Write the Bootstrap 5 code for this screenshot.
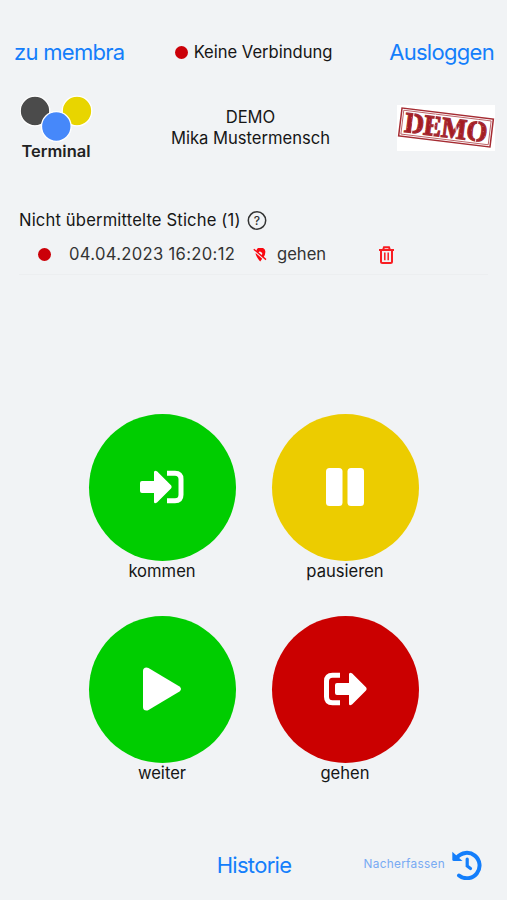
<!DOCTYPE html>
<html lang="de">
<head>
<meta charset="utf-8">
<meta name="viewport" content="width=device-width, initial-scale=1">
<title>Terminal</title>
<link href="https://cdn.jsdelivr.net/npm/bootstrap@5.3.0/dist/css/bootstrap.min.css" rel="stylesheet">
<style>
body{background:#f1f3f5;color:#161616;font-family:Inter,"Liberation Sans",sans-serif;font-size:16.6px;line-height:21px;height:900px;overflow:hidden}
a{color:#147efb;text-decoration:none}
svg{display:block;flex:none}
.topbar{height:44px;margin-top:30px;padding:0 13px 0 14px;display:grid;grid-template-columns:minmax(0,1fr) auto minmax(0,1fr)}
.topbar a,.history{font-size:22px;line-height:28px;letter-spacing:-.7px}
.status{gap:6px;letter-spacing:-.02px}
.dot{width:13px;height:13px;background:#cb0008;flex:none}
.status .dot{margin-left:-1px}
.brand{height:76px;margin-top:16px;padding:0 12px 0 20px;display:grid;grid-template-columns:minmax(0,1fr) auto minmax(0,1fr)}
.person{margin-right:14px}
.pending{height:203.5px;margin-top:44px;padding:0 19px}
.ttl{letter-spacing:.16px}
.stamp-row{height:40px;margin-top:4px;padding-left:19px;border-bottom:1px solid #eceef0;color:#333}
.stamp-time{margin-left:18px;width:167px;letter-spacing:.32px}
.stamp-pin{margin:0 10px 0 17px}
.stamp-kind{width:102px}
.actions{padding:0 70.5px}
.action{height:201.5px;color:#161616}
.action+.action+.action{padding-top:.5px}
.disc{width:147px;height:147px;color:#fff}
.go{background:#00cd00}.hold{background:#eccc00}.stop{background:#cb0000}
.bottom{height:44px;margin-top:26px;padding:0 25px 0 26px;display:grid;grid-template-columns:minmax(0,1fr) auto minmax(0,1fr)}
.later{font-size:11.8px;letter-spacing:.3px;color:#78aaf3;gap:7px}
</style>
</head>
<body>
<div class="d-flex flex-column">
<header class="topbar align-items-center">
  <a href="#">zu membra</a>
  <div class="status d-flex align-items-center"><span class="dot rounded-circle"></span><span>Keine Verbindung</span></div>
  <a href="#" class="text-end">Ausloggen</a>
</header>
<section class="brand align-items-center">
  <svg width="74" height="72" viewBox="0 0 74 72">
    <g stroke="#fff" stroke-width="1.3"><circle cx="15" cy="19" r="14.8" fill="#4b4b4b"/><circle cx="57" cy="19" r="14.8" fill="#e8d500"/><circle cx="36.3" cy="34.5" r="14.8" fill="#4688fa"/></g>
    <text x="1.5" y="64.5" textLength="69" lengthAdjust="spacingAndGlyphs" font-size="15.5" font-weight="600" fill="#222">Terminal</text>
  </svg>
  <div class="person text-center">DEMO<br>Mika Mustermensch</div>
  <svg class="ms-auto" width="98" height="46" viewBox="0 0 98 46">
    <path fill="#fff" d="M0 0h98v46H0z"/>
    <g transform="rotate(7 49 22.500)" fill="none" stroke="#a52b32">
      <path stroke-width="1.5" d="M3 8.500h92v28H3z"/><path stroke-width=".7" d="M5 10.500h88v24H5z"/>
      <text x="7.500" y="32" textLength="83" lengthAdjust="spacingAndGlyphs" font-family="Liberation Serif,serif" font-size="29" font-weight="700" fill="#a51c25" stroke-width="1.3">DEMO</text>
      <path stroke="#fff" stroke-width=".9" d="M15.500 11v22M37 11v22M57 13l4 18M80 11v22"/>
      <path stroke="#fff" stroke-width=".5" opacity=".6" stroke-dasharray="1 5" d="M7 17h85M8 22h82M10 27h80"/>
    </g>
  </svg>
</section>
<main>
  <section class="pending">
    <div class="d-flex align-items-center"><span class="ttl me-1">Nicht übermittelte Stiche (1)</span>
      <svg class="ms-1" width="19" height="21" viewBox="1.500 0 19 21" overflow="visible"><circle cx="9.500" cy="10.500" r="8.700" fill="none" stroke="#333" stroke-width="1.500"/><text x="9.500" y="14.800" text-anchor="middle" font-size="12" font-weight="500" fill="#333">?</text></svg>
    </div>
    <div class="stamp-row d-flex align-items-center">
      <span class="dot rounded-circle"></span>
      <span class="stamp-time">04.04.2023 16:20:12</span>
      <svg class="stamp-pin" width="14" height="14" viewBox="0 0 14 14"><path d="M3.300 2.700A4.600 4.600 0 0 1 12.200 5c0 1.500-.8 2.900-1.700 4.200L8.300 7.300a2 2 0 1 0-3-2.500zM2.600 4.900l6.600 5.800-2 2.800C5 10.800 2.400 7.500 2.600 4.900z" fill="#fa0710"/><path d="M.8 1.200l12.200 10.400" stroke="#fa0710" stroke-width="1.400"/></svg>
      <span class="stamp-kind">gehen</span>
      <svg width="15" height="18" viewBox="0 0 15 18" fill="none" stroke="#f81d22" stroke-width="2"><path d="M0 4h15M4 4l1-2.700h5L11 4M2 4v11.500q0 1.500 1.500 1.500h8q1.500 0 1.500-1.500V4"/><path stroke-width="1.500" d="M5.800 6.500v7.700M9.200 6.500v7.700"/></svg>
    </div>
  </section>
  <section class="actions">
    <div class="row g-0">
      <a href="#" class="col-6 action d-flex flex-column align-items-center">
        <span class="disc go rounded-circle d-flex align-items-center justify-content-center"><svg width="44" height="34" viewBox="0 0 44 34"><path fill="currentColor" d="M2 11h12V2.500q0-3 3-1.200l14 14q1.200 1.700 0 3.300l-14 14q-3 1.800-3-1.200V23H2q-2 0-2-2v-8q0-2 2-2z"/><path d="M27 3.200h8q6 0 6 6v15.500q0 6-6 6h-8" fill="none" stroke="currentColor" stroke-width="5"/></svg></span>
        <span>kommen</span></a>
      <a href="#" class="col-6 action d-flex flex-column align-items-center">
        <span class="disc hold rounded-circle d-flex align-items-center justify-content-center"><svg width="38" height="38" viewBox="0 0 38 38" fill="currentColor"><rect width="16.500" height="38" rx="3.500"/><rect x="21.500" width="16.500" height="38" rx="3.500"/></svg></span>
        <span>pausieren</span></a>
      <a href="#" class="col-6 action d-flex flex-column align-items-center">
        <span class="disc go rounded-circle d-flex align-items-center justify-content-center"><svg width="38" height="44" viewBox="0 0 38 44"><path fill="currentColor" d="M0 4Q0 .5 3.500.5q1 0 2 .5l31 18.500q3 2.500 0 5L5.500 43q-1 .5-2 .5Q0 43.500 0 40z"/></svg></span>
        <span>weiter</span></a>
      <a href="#" class="col-6 action d-flex flex-column align-items-center">
        <span class="disc stop rounded-circle d-flex align-items-center justify-content-center"><svg width="43" height="34" viewBox="0 0 43 34"><path d="M16 3.200H8.500q-6 0-6 6v15.500q0 6 6 6H16" fill="none" stroke="currentColor" stroke-width="5"/><path fill="currentColor" d="M13 11h12V2.500q0-3 3-1.200l14 14q1.200 1.700 0 3.300l-14 14q-3 1.800-3-1.200V23H13q-2 0-2-2v-8q0-2 2-2z"/></svg></span>
        <span>gehen</span></a>
    </div>
  </section>
</main>
<footer class="bottom align-items-center">
  <span></span>
  <a href="#" class="history">Historie</a>
  <a href="#" class="later d-flex align-items-center justify-content-end">Nacherfassen
    <svg width="30" height="30" viewBox="0 0 30 30"><g fill="none" stroke="#147efb" stroke-width="4" stroke-linecap="round"><path d="M5 7.500A12.700 12.700 0 1 1 7 25.500"/><path stroke-width="3.200" d="M15.200 9v7l3.300 2.500"/></g><path fill="#147efb" d="M.3 1.800L10.500 11H1.800Q.3 11 .3 9.500z"/></svg></a>
</footer>
</div>
<script src="https://cdn.jsdelivr.net/npm/bootstrap@5.3.0/dist/js/bootstrap.bundle.min.js"></script>
</body>
</html>
